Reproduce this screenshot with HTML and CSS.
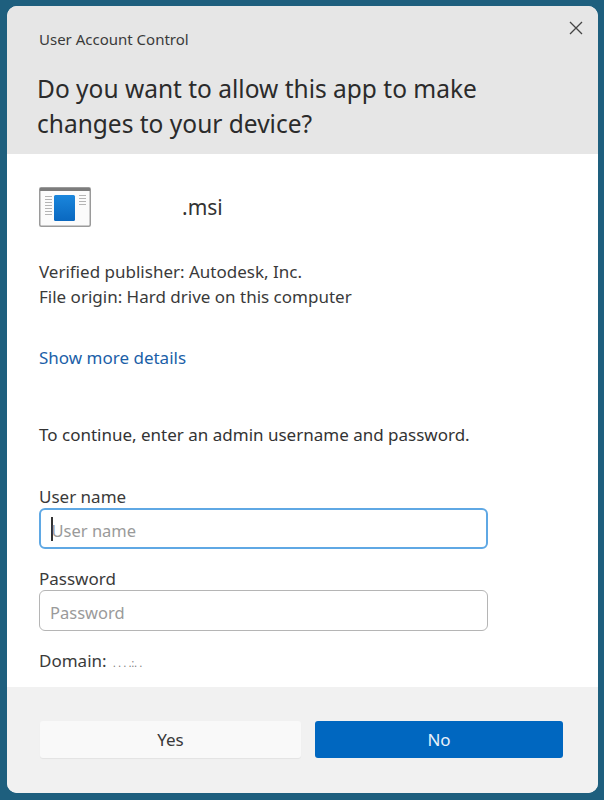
FILE: index.html
```html
<!DOCTYPE html>
<html lang="en">
<head>
	<meta charset="UTF-8">
	<meta name="viewport" content="width=device-width, initial-scale=1.0">
	<title>User Account Control</title>
	<link rel="stylesheet" href="styles.css">
</head>
<body>

	<div class="dialog">
		<header class="head">
			<div class="head-top">
				<div class="head-title">User Account Control</div>
				<svg class="close" width="14" height="14" viewBox="0 0 14 14" aria-hidden="true">
					<path d="M1 1 L13 13 M13 1 L1 13" stroke="#444" stroke-width="1.3" fill="none"/>
				</svg>
			</div>
			<h1>Do you want to allow this app to make changes to your device?</h1>
		</header>

		<div class="content">
			<div class="app-row">
				<svg class="app-icon" width="52" height="40" viewBox="0 0 52 40" aria-hidden="true">
					<defs>
						<linearGradient id="pane" x1="0" y1="0" x2="0" y2="1">
							<stop offset="0" stop-color="#1a86dc"/>
							<stop offset="1" stop-color="#0a68c0"/>
						</linearGradient>
					</defs>
					<rect x="0.75" y="0.75" width="50.5" height="38.5" rx="1.5" fill="#fbfbfb" stroke="#9a9a9a" stroke-width="1.5"/>
					<rect x="1" y="1" width="50" height="3" fill="#7c7c7c"/>
					<rect x="15" y="8" width="21" height="26" rx="1.5" fill="url(#pane)"/>
					<path d="M6 9.5h7M6 12.5h7M6 15.5h7M6 18.5h7M6 21.5h7M6 24.5h7M6 27.5h7M40 8.5h7M40 11.5h7M40 14.5h7M40 17.5h7" stroke="#b4b4b4" stroke-width="1"/>
				</svg>
				<div class="app-name">.msi</div>
			</div>

			<div class="meta">
				<p>Verified publisher: Autodesk, Inc.</p>
				<p>File origin: Hard drive on this computer</p>
			</div>

			<a class="more" href="#">Show more details</a>

			<p class="prompt">To continue, enter an admin username and password.</p>

			<label class="field-label">User name</label>
			<div class="field field-focus"><span class="caret"></span><span class="hint">User name</span></div>

			<label class="field-label field-label-2">Password</label>
			<div class="field"><span class="hint">Password</span></div>

			<div class="domain">Domain: <span class="domain-name">. . . .:. .</span></div>
		</div>

		<footer class="foot">
			<button class="btn btn-yes">Yes</button>
			<button class="btn btn-no">No</button>
		</footer>
	</div>

</body>
</html>
```

FILE: styles.css
```css
html, body {
	height: 100%;
}
body {
	margin: 0;
	padding: 6px 6px 7px 7px;
	box-sizing: border-box;
	background-color: #1e5f7e;
	font-family: "Noto Sans", "Open Sans", sans-serif;
	color: #333;
}
.dialog {
	height: 787px;
	display: flex;
	flex-direction: column;
	border-radius: 10px;
	overflow: hidden;
	background-color: #fff;
}
.head {
	height: 148px;
	box-sizing: border-box;
	padding: 23px 14px 0 32px;
	background-color: #e6e6e6;
	flex: none;
}
.head-top {
	display: flex;
	justify-content: space-between;
}
.head-title {
	font-size: 15px;
	line-height: 20px;
	color: #3a3a3a;
}
.close {
	margin-top: -8px;
	margin-right: 1px;
}
h1 {
	margin: 22px 0 0 -2px;
	width: 480px;
	font-size: 24.5px;
	line-height: 35px;
	font-weight: 400;
	color: #2b2b2b;
}
.content {
	flex: 1;
	min-height: 0;
	padding: 33px 32px 0;
}
.app-row {
	display: flex;
	align-items: center;
	height: 40px;
}
.app-name {
	margin-left: 91px;
	font-size: 21px;
	color: #333;
}
.meta {
	margin-top: 32px;
	font-size: 17px;
	line-height: 25px;
	color: #3a3a3a;
}
.meta p {
	margin: 0;
}
.more {
	display: block;
	margin-top: 37px;
	font-size: 17px;
	line-height: 24px;
	color: #1b5fa8;
	text-decoration: none;
}
.prompt {
	margin: 53px 0 0;
	font-size: 17px;
	line-height: 24px;
	color: #333;
}
.field-label {
	display: block;
	margin-top: 39px;
	font-size: 17px;
	line-height: 22px;
	color: #3a3a3a;
}
.field-label-2 {
	margin-top: 19px;
}
.field {
	width: 449px;
	height: 41px;
	box-sizing: border-box;
	display: flex;
	align-items: center;
	padding: 3px 0 0 10px;
	border: 1.5px solid #b5b5b5;
	border-radius: 6px;
	font-size: 16.5px;
}
.field-focus {
	border-color: #5fa8e4;
	border-width: 2px;
}
.caret {
	width: 1.5px;
	height: 24px;
	margin-top: -2px;
	background-color: #333;
	margin-right: -1px;
}
.hint {
	color: #9a9a9a;
}
.domain {
	margin-top: 18px;
	font-size: 17px;
	line-height: 24px;
	color: #3a3a3a;
}
.domain-name {
	margin-left: 2px;
	font-size: 10px;
	color: #777;
}
.foot {
	height: 106px;
	flex: none;
	box-sizing: border-box;
	padding: 34px 34px 0 33px;
	display: flex;
	gap: 14px;
	background-color: #f1f1f1;
}
.btn {
	height: 37px;
	border: 0;
	border-radius: 3px;
	font-family: inherit;
	font-size: 17px;
	padding: 0;
}
.btn-yes {
	width: 261px;
	background-color: #f9f9f9;
	color: #3a3a3a;
	box-shadow: 0 1px 1px rgba(0, 0, 0, 0.06);
}
.btn-no {
	width: 248px;
	background-color: #0067c0;
	color: #e8f1fa;
}
```
